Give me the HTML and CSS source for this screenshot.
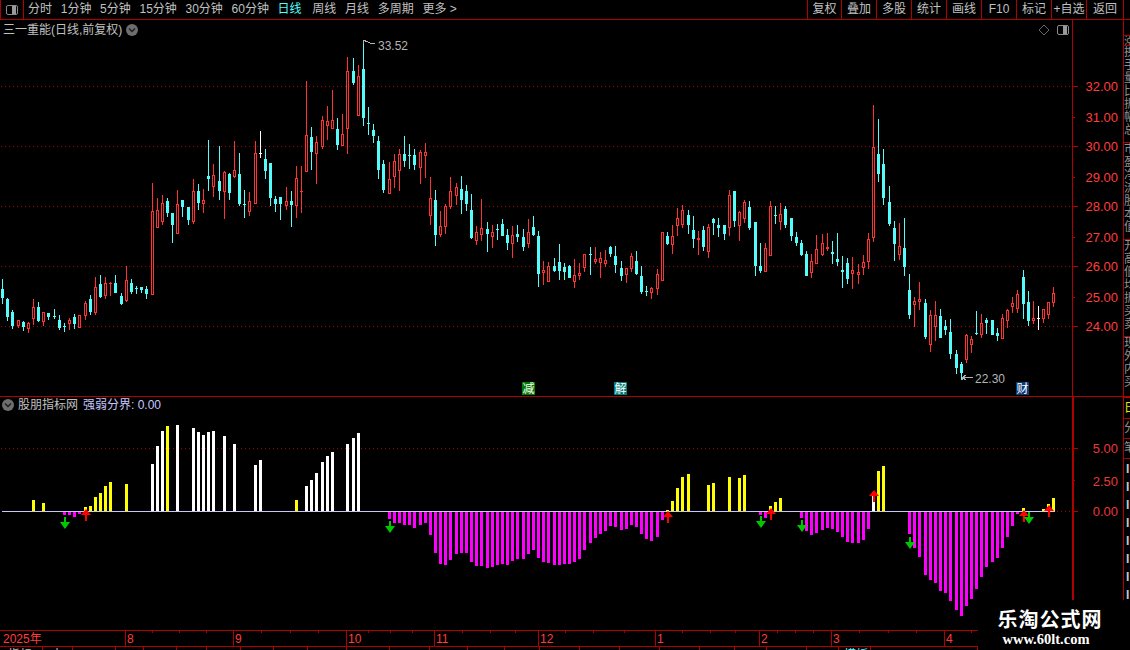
FILE: index.html
```html
<!DOCTYPE html>
<html lang="zh-CN">
<head>
  <meta charset="UTF-8" />
  <title>三一重能 日线</title>
  <link rel="stylesheet" href="styles.css">
</head>
<body>

  <!-- 顶部工具栏 -->
  <header class="toolbar">
    <div class="tool-icon"><span class="panel-icon"></span></div>
    <nav class="periods">
      <span>分时</span>
      <span>1分钟</span>
      <span>5分钟</span>
      <span>15分钟</span>
      <span>30分钟</span>
      <span>60分钟</span>
      <span class="active">日线</span>
      <span>周线</span>
      <span>月线</span>
      <span>多周期</span>
      <span>更多 &gt;</span>
    </nav>
    <nav class="actions">
      <span>复权</span>
      <span>叠加</span>
      <span>多股</span>
      <span>统计</span>
      <span>画线</span>
      <span>F10</span>
      <span>标记</span>
      <span>+自选</span>
      <span>返回</span>
    </nav>
  </header>

  <div class="workspace">
    <div class="charts">

      <!-- K线主图 -->
      <section class="pane pane-main">
        <div class="pane-head">
          <span>三一重能(日线,前复权)</span>
          <svg class="round-btn" viewBox="0 0 12 12"><circle cx="6" cy="6" r="6"/><path d="M3 4.5 6 7.5 9 4.5"/></svg>
        </div>
        <div class="pane-tools">
          <svg class="diamond" viewBox="0 0 12 12"><path d="M6 1 11 6 6 11 1 6Z"/></svg>
          <span class="panel-icon"></span>
        </div>
        <svg class="plot" width="1123" height="376" viewBox="0 20 1123 376">
          <path class="grid" data-rows="86,146,206,266,326" data-from="1"/>
          <g id="candles"></g>
          <path class="leader" d="M363.5 44V40.5H366M364 40.5 370 43 375 43.5"/>
          <text class="note" x="378" y="50">33.52</text>
          <path class="leader" d="M962.5 380V377.5H973M962.5 377.5 966 375M962.5 377.5 966 380"/>
          <text class="note" x="975" y="383">22.30</text>
          <rect class="tag-green" x="522" y="382" width="13" height="13"/>
          <text class="tag-text" x="522.5" y="393">减</text>
          <rect class="tag-teal" x="614" y="382" width="13" height="13"/>
          <text class="tag-text" x="614.5" y="393">解</text>
          <rect class="tag-navy" x="1016" y="382" width="13" height="13"/>
          <text class="tag-text" x="1016.5" y="393">财</text>
          <g class="axis">
            <line x1="1072.5" x2="1072.5" y1="20" y2="396"/>
            <line x1="1072" x2="1078" y1="86.5" y2="86.5"/>
            <line x1="1072" x2="1075" y1="117.5" y2="117.5"/>
            <line x1="1072" x2="1078" y1="146.5" y2="146.5"/>
            <line x1="1072" x2="1075" y1="177.5" y2="177.5"/>
            <line x1="1072" x2="1078" y1="206.5" y2="206.5"/>
            <line x1="1072" x2="1075" y1="237.5" y2="237.5"/>
            <line x1="1072" x2="1078" y1="266.5" y2="266.5"/>
            <line x1="1072" x2="1075" y1="297.5" y2="297.5"/>
            <line x1="1072" x2="1078" y1="326.5" y2="326.5"/>
          </g>
          <g class="price-labels">
            <text x="1118" y="91">32.00</text>
            <text x="1118" y="122">31.00</text>
            <text x="1118" y="151">30.00</text>
            <text x="1118" y="182">29.00</text>
            <text x="1118" y="211">28.00</text>
            <text x="1118" y="242">27.00</text>
            <text x="1118" y="271">26.00</text>
            <text x="1118" y="302">25.00</text>
            <text x="1118" y="331">24.00</text>
          </g>
        </svg>
      </section>

      <!-- 副图指标 -->
      <section class="pane pane-sub">
        <div class="pane-head">
          <svg class="round-btn" viewBox="0 0 12 12"><circle cx="6" cy="6" r="6"/><path d="M3 4.5 6 7.5 9 4.5"/></svg>
          <span>股朋指标网</span>
          <span class="index-value">强弱分界: 0.00</span>
        </div>
        <svg class="plot" width="1123" height="233" viewBox="0 397 1123 233">
          <path class="grid" data-rows="448" data-from="1"/>
          <path class="grid" data-rows="511" data-from="1057"/>
          <g id="bars"></g>
          <line class="zero-line" x1="2" x2="1055" y1="511.5" y2="511.5"/>
          <g id="arrows"></g>
          <g class="axis axis-sub">
            <line x1="1073" x2="1073" y1="397" y2="630"/>
            <line x1="1073" x2="1078" y1="448.5" y2="448.5"/>
            <line x1="1073" x2="1075" y1="480.5" y2="480.5"/>
            <line x1="1073" x2="1078" y1="511.5" y2="511.5"/>
          </g>
          <g class="price-labels price-labels-sub">
            <text x="1118" y="453">5.00</text>
            <text x="1118" y="486">2.50</text>
            <text x="1118" y="516">0.00</text>
          </g>
        </svg>
      </section>

      <!-- 时间轴 -->
      <svg class="time-axis" width="1123" height="17" viewBox="0 630 1123 17">
        <g class="axis">
          <line x1="0" x2="1123" y1="630.5" y2="630.5"/>
          <line x1="0" x2="1123" y1="646.5" y2="646.5"/>
          <line x1="125.5" x2="125.5" y1="630" y2="646"/>
          <line x1="233.5" x2="233.5" y1="630" y2="646"/>
          <line x1="346.5" x2="346.5" y1="630" y2="646"/>
          <line x1="434.5" x2="434.5" y1="630" y2="646"/>
          <line x1="538.5" x2="538.5" y1="630" y2="646"/>
          <line x1="655.5" x2="655.5" y1="630" y2="646"/>
          <line x1="759.5" x2="759.5" y1="630" y2="646"/>
          <line x1="831.5" x2="831.5" y1="630" y2="646"/>
          <line x1="944.5" x2="944.5" y1="630" y2="646"/>
          <path d="M152.5 630v3M179.5 630v3M206.5 630v3M261.5 630v3M290.5 630v3M318.5 630v3M368.5 630v3M390.5 630v3M412.5 630v3M462.5 630v3M490.5 630v3M515.5 630v3M565.5 630v3M593.5 630v3M624.5 630v3M682.5 630v3M710.5 630v3M735.5 630v3M777.5 630v3M795.5 630v3M813.5 630v3M859.5 630v3M888.5 630v3M916.5 630v3M971.5 630v3"/>
        </g>
        <g class="months">
          <text x="3" y="643">2025年</text>
          <text x="127" y="643">8</text>
          <text x="235" y="643">9</text>
          <text x="348" y="643">10</text>
          <text x="436" y="643">11</text>
          <text x="540" y="643">12</text>
          <text x="657" y="643">1</text>
          <text x="761" y="643">2</text>
          <text x="833" y="643">3</text>
          <text x="946" y="643">4</text>
        </g>
      </svg>

      <!-- 底部标签, 只露出顶上几行像素 -->
      <div class="tabs">
        <span>指标</span>
        <span>十</span>
        <span></span><span></span><span></span><span></span><span></span><span></span>
        <span></span><span></span><span></span><span></span><span></span><span></span>
        <span></span><span></span><span></span><span></span><span></span><span></span>
        <span></span><span></span><span></span>
        <span class="active">模板</span>
        <span></span>
      </div>
    </div>

    <!-- 右侧被裁切的行情栏 -->
    <aside class="quotes">
      <div class="quote-row row-a"></div>
      <div class="quote-row row-b">涨</div>
      <div class="quote-row row-c">换<br>手<br>量<br>比<br>振<br>幅<br>总</div>
      <div class="quote-row row-c">市<br>盈<br>净<br>流<br>股<br>本<br>值</div>
      <div class="quote-row row-c">开<br>高<br>低<br>均<br>振<br>买<br>卖</div>
      <div class="quote-row row-d">现<br>外<br>内<br>买</div>
      <div class="quote-row row-e yellow">日</div>
      <div class="quote-row row-f">分</div>
      <div class="quote-row row-f">笔</div>
      <div class="quote-row row-list">I<br>I<br>I<br>I<br>I<br>I<br>I<br>I</div>
    </aside>
  </div>

  <div class="watermark">
    <div class="wm-title">乐淘公式网</div>
    <div class="wm-url">www.60lt.com</div>
  </div>

  <script src="chart.js"></script>
</body>
</html>
```

FILE: styles.css
```css
html, body {
  margin: 0;
  height: 650px;
  overflow: hidden;
  background: #000;
}

body {
  position: relative;
  width: 1130px;
  font-family: "Liberation Sans", "Noto Sans CJK SC", sans-serif;
  font-size: 12px;
  color: #c0c0c0;
}

.toolbar {
  display: flex;
  height: 19px;
  line-height: 18px;
  padding-right: 6px;
  border-bottom: 1px solid #b00000;
}

.tool-icon {
  box-sizing: border-box;
  width: 24px;
  padding: 5px 0 0 5px;
  border-left: 1px solid #b00000;
  border-right: 1px solid #b00000;
}

.panel-icon {
  display: block;
  box-sizing: border-box;
  width: 12px;
  height: 10px;
  border: 1px solid #8a8a8a;
  border-radius: 2px;
  padding-left: 5px;
}

.panel-icon::after {
  content: "";
  display: block;
  width: 4px;
  height: 8px;
  background: #9a9a9a;
}

.periods {
  display: flex;
  gap: 8.7px;
  padding-left: 4px;
}

.periods .active {
  margin-right: 2px;
  color: #54fcfc;
}

.actions {
  display: flex;
  margin-left: auto;
}

.actions span {
  box-sizing: border-box;
  width: 35px;
  text-align: center;
  border-left: 1px solid #b00000;
}

.actions span:first-child {
  width: 34px;
}

.actions span:last-child {
  width: 38px;
  border-right: 1px solid #b00000;
}

.workspace {
  display: flex;
}

.charts {
  flex: none;
  width: 1123px;
}

.pane {
  position: relative;
}

.pane-main {
  height: 376px;
  border-bottom: 1px solid #b00000;
}

.pane-sub {
  height: 233px;
}

.plot, .time-axis {
  display: block;
}

.pane-head {
  position: absolute;
  top: 2px;
  left: 3px;
  display: flex;
  align-items: center;
  gap: 4px;
  line-height: 16px;
}

.pane-sub .pane-head {
  left: 2px;
  top: 0;
}

.index-value {
  margin-left: 1px;
  color: #c8c8ff;
}

.round-btn {
  width: 12px;
  height: 12px;
}

.round-btn circle {
  fill: #6e6e6e;
}

.round-btn path {
  fill: none;
  stroke: #1c1c1c;
  stroke-width: 1.4;
}

.pane-tools {
  position: absolute;
  top: 4px;
  left: 1038px;
  display: flex;
  align-items: center;
  gap: 7px;
}

.diamond {
  width: 12px;
  height: 12px;
}

.diamond path {
  fill: none;
  stroke: #666;
}

.grid {
  fill: #a00000;
  shape-rendering: crispEdges;
}

.axis line, .axis path {
  stroke: #b00000;
  fill: none;
  shape-rendering: crispEdges;
}

.axis-sub line:first-child {
  stroke-width: 2;
}

.zero-line {
  stroke: #c8c8ff;
  shape-rendering: crispEdges;
}

.price-labels text {
  fill: #ff3c3c;
  font-size: 13px;
  text-anchor: end;
}

.price-labels-sub text {
  fill: #e83838;
}

.months text {
  fill: #ff3c3c;
  font-size: 12px;
}

.note {
  fill: #b4b4b4;
  font-size: 12px;
}

.leader {
  fill: none;
  stroke: #b4b4b4;
  shape-rendering: crispEdges;
}

.tag-text {
  fill: #fff;
  font-size: 12px;
}

.tag-green {
  fill: #007c00;
}

.tag-teal {
  fill: #007c7c;
}

.tag-navy {
  fill: #0a3c78;
}

/* K线 */
#candles rect, #bars rect {
  shape-rendering: crispEdges;
}

.fall {
  fill: #54fcfc;
}

.rise {
  fill: #ff3232;
}

.rise-body {
  fill: none;
  stroke: #ff3232;
}

.flat {
  fill: #fff;
}

/* 副图柱 */
.bar-y {
  fill: #ffff00;
}

.bar-w {
  fill: #fff;
}

.bar-m {
  fill: #ff00ff;
}

.arrow-up {
  fill: #ff0000;
}

.arrow-down {
  fill: #00c800;
}

.tabs {
  display: grid;
  grid-template-columns: 43px 30px 43px 28px 33px 30px 34px 33px 34px 39px 43px 40px 38px 37px 35px 40px 40px 40px 40px 35px 32px 40px 32px 32px 107px;
  height: 3px;
  overflow: hidden;
  line-height: 16px;
}

.tabs span {
  box-sizing: border-box;
  padding-left: 8px;
  border-right: 1px solid #b00000;
}

.tabs .active {
  padding-left: 5px;
  color: #54fcfc;
}

.quotes {
  display: flex;
  flex-direction: column;
  flex: 1;
  overflow: hidden;
  box-sizing: border-box;
  height: 630px;
  line-height: 13px;
  color: #909090;
  border-left: 1px solid #b00000;
}

.quote-row {
  flex: none;
  box-sizing: border-box;
  overflow: hidden;
  white-space: nowrap;
  border-bottom: 1px solid #b00000;
}

.row-a {
  height: 16px;
}

.row-b {
  height: 10px;
}

.row-c {
  height: 97px;
}

.row-d {
  height: 61px;
  border-bottom-width: 2px;
}

.row-e {
  height: 21px;
  padding-top: 4px;
}

.row-f {
  height: 20px;
  padding-top: 3px;
}

.row-list {
  padding: 1px 0 0 2px;
  border-bottom: 0;
  line-height: 18px;
  font-weight: bold;
  color: #c8c8c8;
}

.yellow {
  color: #e8e800;
}

.watermark {
  position: absolute;
  left: 978px;
  right: 0;
  top: 600px;
  bottom: 0;
  background: #000;
  text-align: center;
  color: #fff;
  font-weight: bold;
}

.wm-title {
  margin: 8px 0 0 -8px;
  font-size: 20px;
  line-height: 24px;
  letter-spacing: 1px;
}

.wm-url {
  margin-left: -16px;
  font-family: "Liberation Serif", serif;
  font-size: 14.5px;
  line-height: 14px;
}
```

FILE: chart.js
```js
const SVG_NS = 'http://www.w3.org/2000/svg';
const GRID_RIGHT = 1072;

// 每根K线: 类型, 最高, 实体上沿, 实体下沿, 最低 (像素行)
const CANDLES = [
  'c,279,289,298,304', 'c,298,299,317,321', 'c,310,312,326,329', 'r,320,320,326,328', 'c,321,322,327,331',
  'r,322,323,329,333', 'r,299,307,319,325', 'c,302,307,321,322', 'r,312,312,322,326', 'c,313,313,317,320',
  'c,309,316,317,319', 'c,315,320,328,330', 'c,323,326,327,332', 'r,318,320,324,330', 'c,314,317,324,329',
  'r,315,315,328,328', 'r,301,303,316,320', 'c,295,299,312,315', 'r,277,287,313,315', 'c,275,284,297,298',
  'r,277,283,296,299', 'r,282,283,284,296', 'c,275,283,293,293', 'c,293,296,304,305', 'r,266,280,301,302',
  'c,279,283,292,294', 'c,286,288,289,294', 'c,287,287,290,293', 'c,286,289,294,299', 'r,183,211,295,295',
  'r,198,210,228,228', 'r,195,203,222,225', 'c,198,201,213,217', 'c,213,213,225,243', 'r,190,204,234,234',
  'c,200,200,207,217', 'c,207,207,220,225', 'r,179,191,222,224', 'c,184,191,203,210', 'r,189,200,204,213',
  'c,140,176,179,191', 'r,164,175,187,197', 'c,146,181,191,200', 'r,171,172,192,219', 'c,173,174,193,200',
  'r,141,170,177,178', 'c,153,174,204,206', 'c,190,204,205,218', 'r,192,201,212,216', 'r,141,153,204,204',
  'w,131,153,154,158', 'c,149,159,171,179', 'c,163,163,198,206', 'c,196,199,204,212', 'c,197,197,204,220',
  'r,187,201,206,210', 'c,191,201,205,227', 'r,166,178,206,218', 'r,166,191,192,213', 'r,81,135,172,172',
  'c,127,137,152,170', 'r,136,142,154,184', 'r,116,120,147,149', 'r,106,121,126,140', 'r,90,120,129,129',
  'c,118,129,145,150', 'r,114,134,146,146', 'r,57,71,129,154', 'c,58,71,83,85', 'r,65,76,116,116',
  'c,40,69,118,126', 'c,107,123,124,135', 'c,124,130,136,143', 'c,136,141,170,179', 'c,160,164,190,193',
  'r,162,179,194,194', 'r,154,161,177,188', 'r,149,154,171,191', 'c,136,154,161,167', 'c,144,155,156,169',
  'c,149,155,165,170', 'r,150,152,168,184', 'r,143,152,156,178', 'r,177,198,216,225', 'c,190,200,235,246',
  'r,211,226,235,237', 'r,204,206,227,234', 'r,177,191,207,209', 'r,183,187,196,205', 'c,176,189,200,214',
  'c,185,191,204,211', 'c,194,210,238,239', 'r,226,232,241,245', 'r,199,228,235,241', 'c,222,229,234,252',
  'r,225,232,237,248', 'c,224,229,230,240', 'c,219,224,236,236', 'c,229,235,243,250', 'r,226,235,244,258',
  'c,225,234,237,242', 'c,229,237,247,251', 'r,219,232,244,248', 'c,216,227,235,236', 'c,231,236,274,287',
  'r,261,270,273,285', 'r,262,266,282,282', 'c,258,266,271,272', 'c,244,262,271,280', 'c,263,267,272,280',
  'c,265,266,278,278', 'r,259,275,282,288', 'r,263,273,276,280', 'r,254,254,268,272', 'c,247,254,255,275',
  'r,247,259,262,264', 'r,252,258,263,278', 'r,250,260,264,267', 'c,246,247,254,257', 'c,246,256,265,273',
  'c,261,268,276,281', 'r,268,268,275,283', 'r,253,256,269,272', 'c,251,261,274,275', 'c,266,276,292,294',
  'c,286,291,292,296', 'r,287,288,293,299', 'r,269,274,289,295', 'r,232,232,281,281', 'c,232,236,244,245',
  'r,225,236,245,254', 'r,208,218,226,236', 'r,205,210,225,228', 'c,210,215,225,234', 'c,216,230,239,248',
  'r,231,238,240,255', 'c,226,230,247,251', 'r,224,227,252,258', 'c,218,219,223,235', 'c,218,225,228,237',
  'c,225,225,234,240', 'r,190,195,228,236', 'c,191,191,221,227', 'r,211,212,226,241', 'r,200,202,219,223',
  'c,201,207,228,230', 'c,222,222,266,276', 'c,243,266,271,273', 'r,243,248,272,272', 'r,201,206,256,256',
  'c,206,215,216,224', 'r,203,214,222,230', 'c,206,209,225,228', 'c,218,218,236,241', 'c,232,237,243,246',
  'c,240,243,255,256', 'c,251,254,276,276', 'r,254,261,273,278', 'r,235,249,264,264', 'r,234,243,255,256',
  'r,233,247,249,251', 'c,241,252,254,264', 'c,233,259,262,266', 'c,256,270,272,288', 'c,258,263,279,284',
  'r,257,270,274,289', 'r,264,272,275,284', 'r,255,262,268,275', 'r,233,239,262,269', 'r,105,147,238,242',
  'c,119,154,174,182', 'c,149,164,198,205', 'c,186,202,224,226', 'c,221,228,244,261', 'r,223,246,255,260',
  'c,218,248,267,276', 'c,274,290,315,319', 'r,297,301,305,327', 'r,282,299,302,310', 'c,299,303,337,339',
  'r,310,315,345,352', 'r,301,315,327,341', 'c,309,316,338,338', 'c,320,326,330,335', 'c,319,332,354,359',
  'c,350,354,368,374', 'c,362,364,373,380', 'r,334,335,360,363', 'r,336,339,345,353', 'c,311,333,334,335',
  'r,314,323,335,338', 'c,318,320,323,334', 'c,320,320,335,335', 'c,328,333,336,341', 'r,314,318,339,339',
  'r,309,310,321,328', 'r,297,303,307,313', 'r,290,294,309,313', 'c,270,277,304,319', 'c,291,302,321,326',
  'r,301,318,321,324', 'w,306,318,319,330', 'r,309,309,319,323', 'r,302,302,315,319', 'r,287,293,303,307'
];

// 副图柱: 序号 -> 柱顶
const YELLOW = { 6: 500, 8: 503, 16: 507, 17: 506, 18: 497, 19: 493, 20: 486, 21: 482, 24: 484, 32: 426, 57: 500,
  129: 510, 130: 501, 131: 488, 132: 477, 133: 474, 137: 485, 138: 483, 141: 477, 143: 478, 144: 475,
  149: 506, 150: 502, 151: 498, 170: 471, 171: 466, 198: 508, 202: 509, 203: 504, 204: 498 };

const WHITE = { 29: 464, 30: 446, 31: 431, 34: 425, 37: 428, 38: 432, 39: 435, 40: 432, 41: 431, 43: 436, 45: 444,
  49: 465, 50: 460, 59: 486, 60: 480, 61: 473, 62: 462, 63: 456, 64: 452, 67: 444, 68: 438, 69: 433, 169: 492 };

// 品红柱: 序号 -> 柱底
const MAGENTA = { 12: 515, 13: 515, 14: 517, 15: 514, 147: 515, 148: 518, 197: 514 };
const RUNS = [
  [75, [519, 523, 523, 525, 525, 528, 525, 523, 535, 553, 564, 565, 560, 554, 553, 553, 562, 566, 566, 568, 567,
    565, 564, 565, 561, 559, 559, 554, 550, 558, 562, 563, 565, 565, 564, 564, 562, 559, 550, 543, 538, 534,
    531, 526, 527, 530, 529, 525, 527, 534, 539, 541, 537, 520]],
  [155, [518, 531, 535, 533, 530, 528, 529, 532, 537, 542, 543, 543, 540, 529]],
  [176, [534, 548, 557, 575, 580, 583, 591, 593, 601, 610, 616, 606, 599, 589, 577, 567, 562, 558, 548, 537, 526]]
];

const ARROWS_UP = [[86, 509], [668, 511], [771, 508], [874, 490], [1024, 510], [1049, 505]];
const ARROWS_DOWN = [[65, 517], [390, 521], [761, 516], [802, 520], [910, 537], [1029, 512]];

function px(i) {
  return 2 + Math.floor(i * 5.1538 + 0.58);
}

function addRect(parent, cls, x, y, w, h) {
  if (h <= 0) return;
  const el = document.createElementNS(SVG_NS, 'rect');
  el.setAttribute('class', cls);
  el.setAttribute('x', x);
  el.setAttribute('y', y);
  el.setAttribute('width', w);
  el.setAttribute('height', h);
  parent.appendChild(el);
}

function addPoly(parent, cls, points) {
  const el = document.createElementNS(SVG_NS, 'polygon');
  el.setAttribute('class', cls);
  el.setAttribute('points', points);
  parent.appendChild(el);
}

// 网格点: 1像素点, 每4像素一个
function drawGrid() {
  document.querySelectorAll('path.grid').forEach(path => {
    let d = '';
    path.dataset.rows.split(',').forEach(y => {
      for (let x = +path.dataset.from; x < GRID_RIGHT; x += 4) {
        d += `M${x} ${y}h1v1h-1z`;
      }
    });
    path.setAttribute('d', d);
  });
}

function drawCandles() {
  const group = document.getElementById('candles');
  CANDLES.forEach((row, i) => {
    const parts = row.split(',');
    const kind = parts[0];
    const high = +parts[1], top = +parts[2], bottom = +parts[3], low = +parts[4];
    const x = px(i);
    const cls = kind === 'c' ? 'fall' : kind === 'r' ? 'rise' : 'flat';

    addRect(group, cls, x, high, 1, top - high);
    addRect(group, cls, x, bottom, 1, low - bottom);

    if (kind === 'r' && bottom - top > 2) {
      addRect(group, 'rise-body', x - 0.5, top + 0.5, 2, bottom - top - 1);
    } else {
      addRect(group, cls, x - 1, top, 3, Math.max(bottom - top, 1));
    }
  });
}

function drawBars() {
  const group = document.getElementById('bars');
  Object.keys(YELLOW).forEach(i => addRect(group, 'bar-y', px(+i) - 1, YELLOW[i], 3, 511 - YELLOW[i]));
  Object.keys(WHITE).forEach(i => addRect(group, 'bar-w', px(+i) - 1, WHITE[i], 3, 511 - WHITE[i]));
  Object.keys(MAGENTA).forEach(i => addRect(group, 'bar-m', px(+i) - 1, 512, 3, MAGENTA[i] - 512));
  RUNS.forEach(run => {
    run[1].forEach((end, k) => addRect(group, 'bar-m', px(run[0] + k) - 1, 512, 3, end - 512));
  });
}

function drawArrows() {
  const group = document.getElementById('arrows');
  ARROWS_UP.forEach(a => {
    const x = a[0], y = a[1];
    addPoly(group, 'arrow-up', `${x},${y} ${x + 5},${y + 6} ${x + 1},${y + 6} ${x + 1},${y + 12} ${x - 1},${y + 12} ${x - 1},${y + 6} ${x - 5},${y + 6}`);
  });
  ARROWS_DOWN.forEach(a => {
    const x = a[0], y = a[1];
    addPoly(group, 'arrow-down', `${x - 1},${y} ${x + 1},${y} ${x + 1},${y + 5} ${x + 5},${y + 5} ${x},${y + 12} ${x - 5},${y + 5} ${x - 1},${y + 5}`);
  });
}

drawGrid();
drawCandles();
drawBars();
drawArrows();
```
